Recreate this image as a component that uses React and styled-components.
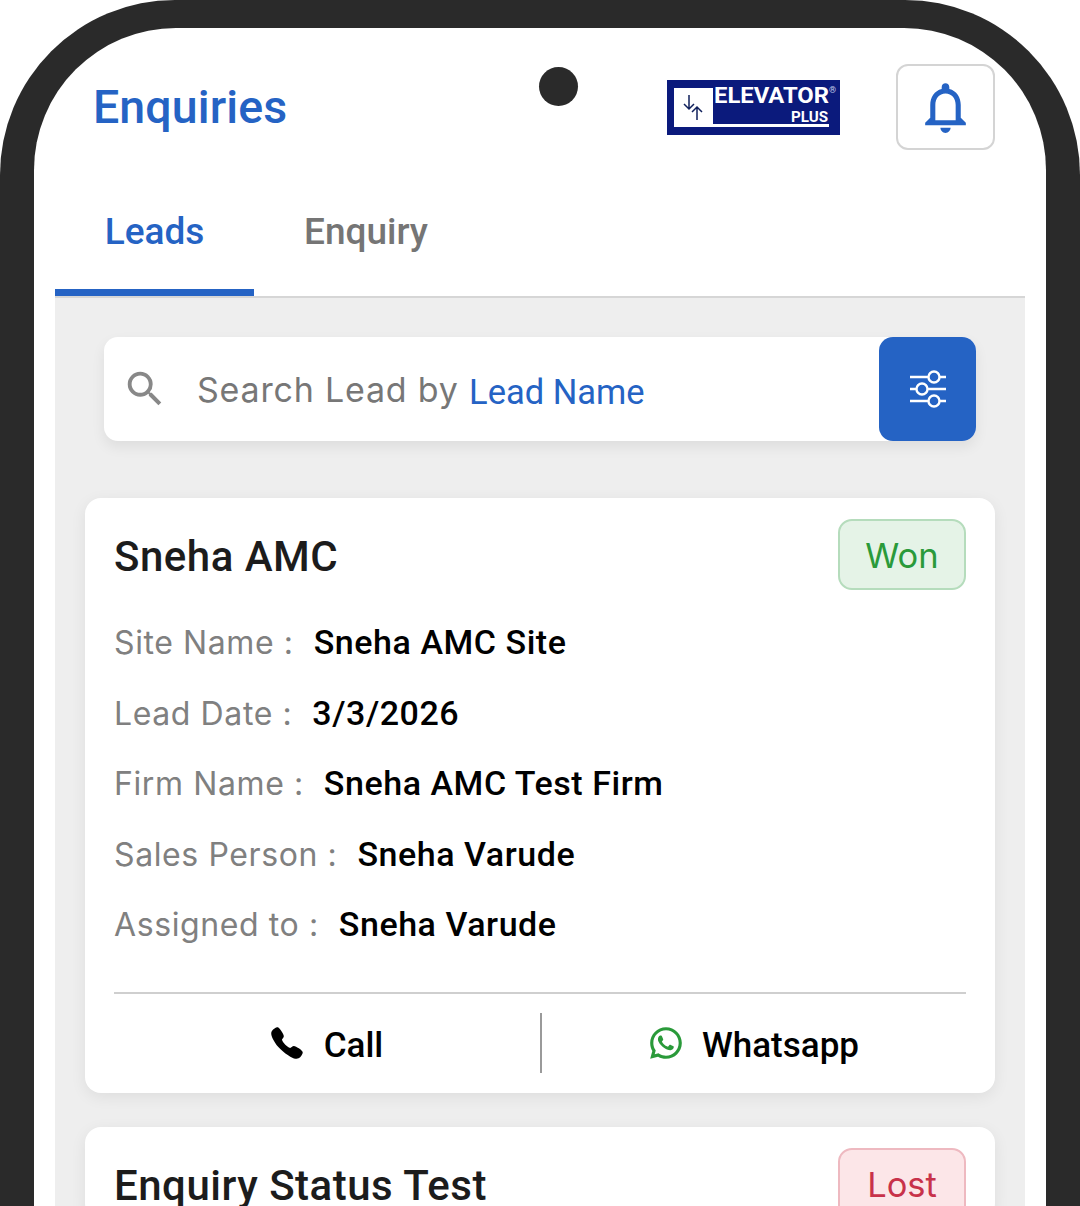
import styled, { createGlobalStyle } from "styled-components";
import { MdNotificationsNone, MdSearch } from "react-icons/md";
import { IoCall } from "react-icons/io5";
import { RiWhatsappLine } from "react-icons/ri";

const blue = "#2563c4";

const leads = [
  {
    name: "Sneha AMC",
    status: "Won",
    fields: [
      ["Site Name", "Sneha AMC Site"],
      ["Lead Date", "3/3/2026"],
      ["Firm Name", "Sneha AMC Test Firm"],
      ["Sales Person", "Sneha Varude"],
      ["Assigned to", "Sneha Varude"],
    ],
  },
  { name: "Enquiry Status Test", status: "Lost", fields: [] },
];

const Logo = () => (
  <LogoSvg viewBox="0 0 173 55">
    <rect width="173" height="55" fill="#0b1a7c" />
    <rect x="7" y="8" width="39" height="39" fill="#fff" />
    <rect x="46" y="44" width="116" height="3" fill="#fff" />
    <path
      d="M22 15v14M17 24l5 5 5-5M30 40V27M25 32l5-5 5 5"
      fill="none"
      stroke="#10205c"
      strokeWidth="1.5"
    />
    <text
      x="47"
      y="23"
      fill="#fff"
      fontFamily="Roboto, sans-serif"
      fontSize="21.5"
      fontWeight="700"
      textLength="115"
      lengthAdjust="spacingAndGlyphs"
    >
      ELEVATOR
    </text>
    <text x="162" y="13" fill="#c5cbe8" fontFamily="Roboto, sans-serif" fontSize="9">
      ®
    </text>
    <text
      x="124"
      y="42"
      fill="#fff"
      fontFamily="Roboto, sans-serif"
      fontSize="14"
      fontWeight="700"
      textLength="37"
      lengthAdjust="spacingAndGlyphs"
    >
      PLUS
    </text>
  </LogoSvg>
);

const SlidersIcon = () => (
  <svg width="38" height="38" viewBox="0 0 38 38" fill="none" stroke="#fff" strokeWidth="2.4">
    <path d="M1 7h18M31 7h6M1 19h6M19 19h18M1 31h18M31 31h6" />
    <circle cx="25" cy="7" r="5.5" />
    <circle cx="13" cy="19" r="5.5" />
    <circle cx="25" cy="31" r="5.5" />
  </svg>
);

function LeadCard({ lead }) {
  return (
    <Card>
      <CardHead>
        <LeadName>{lead.name}</LeadName>
        <Badge $status={lead.status}>{lead.status}</Badge>
      </CardHead>
      {lead.fields.length > 0 && (
        <>
          <Fields>
            {lead.fields.map(([label, value]) => (
              <Field key={label}>
                <FieldLabel>{label} :</FieldLabel>
                <FieldValue>{value}</FieldValue>
              </Field>
            ))}
          </Fields>
          <Actions>
            <Action>
              <IoCall size={36} color="#000" />
              <ActionLabel>Call</ActionLabel>
            </Action>
            <Action>
              <RiWhatsappLine size={38} color="#2a9a3a" />
              <ActionLabel>Whatsapp</ActionLabel>
            </Action>
          </Actions>
        </>
      )}
    </Card>
  );
}

export default function App() {
  return (
    <Page>
      <GlobalStyle />
      <Phone>
        <Screen>
          <Camera />
          <Header>
            <Title>Enquiries</Title>
            <HeaderRight>
              <Logo />
              <BellButton>
                <MdNotificationsNone size={61} color={blue} />
              </BellButton>
            </HeaderRight>
          </Header>
          <Tabs>
            <Tab $active>Leads</Tab>
            <Tab>Enquiry</Tab>
          </Tabs>
          <Content>
            <SearchBar>
              <SearchField>
                <MdSearch size={46} color="#888" />
                <SearchText>
                  Search Lead by <SearchKey>Lead Name</SearchKey>
                </SearchText>
              </SearchField>
              <FilterButton>
                <SlidersIcon />
              </FilterButton>
            </SearchBar>
            <CardList>
              {leads.map((lead) => (
                <LeadCard key={lead.name} lead={lead} />
              ))}
            </CardList>
          </Content>
        </Screen>
      </Phone>
    </Page>
  );
}

const GlobalStyle = createGlobalStyle`
  html, body {
    margin: 0;
    padding: 0;
    background: #fff;
  }
  * {
    box-sizing: border-box;
  }
`;

const Page = styled.div`
  width: 1080px;
  height: 1206px;
  overflow: hidden;
  background: #fff;
  font-family: Roboto, "Liberation Sans", sans-serif;
`;

const Phone = styled.div`
  height: 1240px;
  padding: 28px 34px 0;
  background: #2a2a2a;
  border-radius: 175px 175px 0 0;
`;

const Screen = styled.div`
  position: relative;
  height: 100%;
  padding: 0 21px;
  background: #fff;
  border-radius: 142px 142px 0 0;
`;

const Camera = styled.div`
  position: absolute;
  top: 39px;
  left: 505px;
  width: 39px;
  height: 39px;
  border-radius: 50%;
  background: #2a2a2a;
`;

const Header = styled.header`
  display: flex;
  align-items: center;
  justify-content: space-between;
  height: 158px;
  padding: 0 30px 0 38px;
`;

const Title = styled.h1`
  margin: 0;
  font-size: 46.5px;
  font-weight: 500;
  letter-spacing: 0.1px;
  color: ${blue};
`;

const HeaderRight = styled.div`
  display: flex;
  align-items: center;
  gap: 56px;
`;

const LogoSvg = styled.svg`
  display: block;
  width: 173px;
  height: 55px;
`;

const BellButton = styled.button`
  display: flex;
  align-items: center;
  justify-content: center;
  width: 99px;
  height: 86px;
  padding: 0;
  background: #fff;
  border: 2px solid #d4d4d4;
  border-radius: 12px;
`;

const Tabs = styled.nav`
  display: flex;
  height: 112px;
  border-bottom: 2px solid #d6d6d6;
`;

const Tab = styled.div`
  display: flex;
  align-items: center;
  justify-content: center;
  width: 199px;
  height: 110px;
  padding-bottom: 12px;
  font-size: 37px;
  font-weight: 500;
  color: ${(p) => (p.$active ? blue : "#757575")};
  border-bottom: 7px solid ${(p) => (p.$active ? blue : "transparent")};
  & + & {
    width: 224px;
  }
`;

const Content = styled.main`
  height: 100%;
  padding: 39px 30px 0;
  background: #eeeeee;
`;

const SearchBar = styled.div`
  display: flex;
  height: 104px;
  margin: 0 19px;
  background: #fff;
  border-radius: 14px;
  box-shadow: 0 6px 14px rgba(0, 0, 0, 0.07);
`;

const SearchField = styled.div`
  flex: 1;
  display: flex;
  align-items: center;
  gap: 29px;
  padding-left: 18px;
`;

const SearchText = styled.div`
  font-family: Inter, Roboto, sans-serif;
  font-size: 34px;
  letter-spacing: 0.8px;
  color: #777;
`;

const SearchKey = styled.span`
  position: relative;
  top: 2px;
  font-family: Roboto, sans-serif;
  font-size: 34.5px;
  letter-spacing: 0;
  color: ${blue};
`;

const FilterButton = styled.button`
  display: flex;
  align-items: center;
  justify-content: center;
  width: 97px;
  padding: 0;
  background: ${blue};
  border: none;
  border-radius: 14px;
`;

const CardList = styled.div`
  display: flex;
  flex-direction: column;
  gap: 34px;
  margin-top: 57px;
`;

const Card = styled.article`
  padding: 21px 29px 0;
  background: #fff;
  border-radius: 16px;
  box-shadow: 0 4px 16px rgba(0, 0, 0, 0.07);
`;

const CardHead = styled.div`
  display: flex;
  align-items: center;
  justify-content: space-between;
  height: 71px;
`;

const LeadName = styled.h2`
  position: relative;
  top: 2px;
  margin: 0;
  font-size: 42px;
  font-weight: 500;
  letter-spacing: 0.5px;
  color: #1c1c1c;
`;

const Badge = styled.div`
  display: flex;
  align-items: center;
  justify-content: center;
  width: 128px;
  height: 71px;
  padding-top: 2px;
  font-family: Inter, Roboto, sans-serif;
  font-size: 34.5px;
  border-radius: 14px;
  border: 2px solid ${(p) => (p.$status === "Won" ? "#b5dcbc" : "#eeb9c0")};
  background: ${(p) => (p.$status === "Won" ? "#e5f3e7" : "#fce6e8")};
  color: ${(p) => (p.$status === "Won" ? "#2a9a3a" : "#c8324a")};
`;

const Fields = styled.div`
  display: flex;
  flex-direction: column;
  gap: 32px;
  margin-top: 33px;
  padding-bottom: 48px;
  border-bottom: 2px solid #cfcfcf;
`;

const Field = styled.div`
  display: flex;
  align-items: baseline;
  gap: 20px;
  height: 38.5px;
  line-height: 38.5px;
`;

const FieldLabel = styled.span`
  font-family: Inter, Roboto, sans-serif;
  font-size: 32px;
  letter-spacing: 0.6px;
  color: #808080;
`;

const FieldValue = styled.span`
  font-size: 34px;
  font-weight: 500;
  letter-spacing: 0.55px;
  color: #000;
`;

const Actions = styled.div`
  display: grid;
  grid-template-columns: 426px 1fr;
  height: 99px;
  align-items: center;
`;

const Action = styled.div`
  display: flex;
  align-items: center;
  justify-content: center;
  gap: 19px;
  height: 60px;
  padding-right: 2px;
  font-size: 35px;
  font-weight: 500;
  color: #000;
  & + & {
    gap: 17px;
    border-left: 2px solid #9a9a9a;
  }
`;

const ActionLabel = styled.span`
  padding-top: 4px;
`;
